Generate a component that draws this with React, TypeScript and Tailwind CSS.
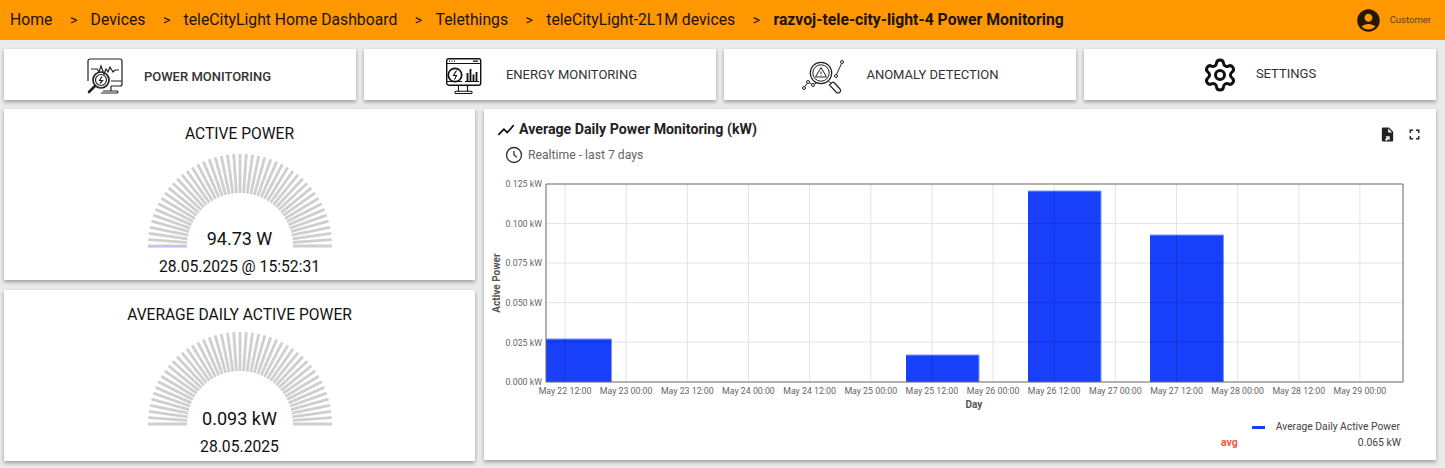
import { Settings } from 'lucide-react'

const crumbs = ['Home', 'Devices', 'teleCityLight Home Dashboard', 'Telethings', 'teleCityLight-2L1M devices']
const xLabels = ['May 22 12:00', 'May 23 00:00', 'May 23 12:00', 'May 24 00:00', 'May 24 12:00', 'May 25 00:00', 'May 25 12:00', 'May 26 00:00', 'May 26 12:00', 'May 27 00:00', 'May 27 12:00', 'May 28 00:00', 'May 28 12:00', 'May 29 00:00']
const yLabels = ['0.125 kW', '0.100 kW', '0.075 kW', '0.050 kW', '0.025 kW', '0.000 kW']
const hLines = [39.6, 79, 118.6, 158]
const bars = [
  { x: 62, y: 155, w: 65.5, h: 43 },
  { x: 422, y: 171, w: 73, h: 27 },
  { x: 544, y: 7, w: 73, h: 191 },
  { x: 666, y: 51, w: 73.5, h: 147 },
]

const gridX = (i: number) => 81 + i * 61.15

function PowerIcon() {
  return (
    <svg width="36" height="36" viewBox="0 0 36 36" fill="none" stroke="#222" strokeWidth="1.2" className="shrink-0 mt-[3px]">
      <path d="M1 17V3a2 2 0 0 1 2-2h30a2 2 0 0 1 2 2v23a2 2 0 0 1-2 2H24" />
      <path d="M1 17v6M24 23h11" />
      <path d="M4 11h6l2 3 2-6 3 8 2-5 2 3 2-5 3 5 2-2h4" />
      <circle cx="14" cy="22" r="8" strokeWidth="1.7" />
      <circle cx="14" cy="22" r="5.500" />
      <path d="M15 18.500l-2.500 4h3L13 25.500" />
      <path d="M8 28l-6 6" strokeWidth="2.600" strokeLinecap="round" />
      <path d="M24 28v5M14 35h16a1 1 0 0 0 0-2H16" />
    </svg>
  )
}

function EnergyIcon() {
  return (
    <svg width="36" height="36" viewBox="0 0 36 36" fill="none" stroke="#111" strokeWidth="1.1" className="shrink-0 mt-[3px]">
      <rect x="0.700" y="0.700" width="34" height="26.500" rx="2" strokeWidth="1.400" />
      <path d="M1 5.500h34" />
      <path d="M3 3.200h1M5.500 3.200h1M8 3.200h1M27 3.200h5" strokeWidth="1.200" />
      <circle cx="9" cy="17" r="6.700" strokeWidth="1.700" />
      <path d="M10.500 12.500l-3 5h3l-2 4" />
      <path d="M21.500 23v-8M24.500 23v-12M27.500 23v-6.500M30.500 23v-9" strokeWidth="1.800" />
      <path d="M19 23.500h14M1 23.500h15" />
      <path d="M12.500 27.500v6M21.500 27.500v6" />
      <path d="M10 35.500a1 1 0 0 1 0-2.200h15a1 1 0 0 1 0 2.200z" />
    </svg>
  )
}

function AnomalyIcon() {
  return (
    <svg width="44" height="34" viewBox="0 0 44 34" fill="none" stroke="#222" strokeWidth="1" className="shrink-0 mt-[5px]">
      <circle cx="20" cy="13" r="10.700" strokeWidth="1.200" />
      <circle cx="20" cy="13" r="8.200" />
      <path d="M20 7.500l5.500 9.500h-11z" />
      <path d="M20 11.500v2.500M20 15v.700" />
      <path d="M27.500 21l2 2" />
      <path d="M28.500 25l2.500-2.500a1.500 1.500 0 0 1 2 0l6 6.500a2.500 2.500 0 0 1-3.500 3.500z" strokeWidth="1.200" />
      <circle cx="41" cy="2" r="1.500" />
      <circle cx="35" cy="16" r="1.500" />
      <path d="M40.500 3.500l-5 11" />
      <circle cx="3" cy="28" r="1.500" />
      <circle cx="7" cy="22" r="1.500" />
      <circle cx="12" cy="25" r="1.500" />
      <path d="M3.800 26.700l2.400-3.400M8.300 22.800l2.400 1.400M13.300 24.300l2.500-1.800" />
    </svg>
  )
}

function Tab({ icon, label, gap, mt, bold }: { icon: React.ReactNode, label: string, gap: string, mt: string, bold?: boolean }) {
  return (
    <div className={`w-[352px] h-[51px] bg-white shadow-[0_2px_4px_rgba(0,0,0,0.35)] flex items-center justify-center ${gap}`}>
      {icon}
      <span className={`text-[13px] leading-none text-[#333] ${mt} ${bold ? 'font-medium text-[#222]' : ''}`}>{label}</span>
    </div>
  )
}

function Gauge({ title, value, stamp, active, gaugeMt, valuePos, stampMt }: { title: string, value: string, stamp: string, active?: boolean, gaugeMt: string, valuePos: string, stampMt: string }) {
  const ticks = Array.from({ length: 47 }, (_, i) => {
    const a = Math.PI - (i / 46) * Math.PI
    return {
      x1: 100 + 53 * Math.cos(a), y1: 96 - 53 * Math.sin(a),
      x2: 100 + 92 * Math.cos(a), y2: 96 - 92 * Math.sin(a),
    }
  })
  return (
    <div className="h-[171px] bg-white shadow-[0_2px_4px_rgba(0,0,0,0.35)] flex flex-col items-center pt-[15px]">
      <div className="text-[15.600px] leading-[20px] text-[#111]">{title}</div>
      <div className={`relative w-[200px] h-[98px] ${gaugeMt}`}>
        <svg width="200" height="98" viewBox="0 0 200 98">
          {ticks.map((t, i) => (
            <line key={i} x1={t.x1} y1={t.y1} x2={t.x2} y2={t.y2} stroke="#d0cece" strokeWidth="2.800" />
          ))}
          {active && <line x1="8" x2="47" y1="96.500" y2="96.500" stroke="#b4c6f5" strokeWidth="1.600" />}
        </svg>
        <div className={`absolute left-0 right-0 text-center text-[18px] leading-[22px] text-[#111] ${valuePos}`}>{value}</div>
      </div>
      <div className={`text-[15.700px] leading-[20px] text-[#111] ${stampMt}`}>{stamp}</div>
    </div>
  )
}

function Chart() {
  return (
    <svg width="950" height="250" viewBox="0 -10 950 250" className="block" style={{ fontFamily: 'Roboto, sans-serif' }}>
      <g stroke="#e3e3e3" strokeWidth="1">
        {hLines.map(y => <line key={y} x1="62" x2="919" y1={y} y2={y} />)}
        {xLabels.map((_, i) => <line key={i} x1={gridX(i)} x2={gridX(i)} y1="0" y2="198" />)}
      </g>
      {bars.map(b => (
        <g key={b.x}>
          <rect x={b.x} y={b.y} width={b.w} height={b.h} fill="#1840fb" />
          <path d={`M${b.x + b.w} ${b.y}V198M${b.x} ${b.y}H${b.x + b.w}`} stroke="#7f97fd" strokeWidth="1" fill="none" />
          {xLabels.map((_, i) => gridX(i) > b.x && gridX(i) < b.x + b.w && (
            <line key={i} x1={gridX(i)} x2={gridX(i)} y1={b.y} y2="198" stroke="#0f2fc4" strokeOpacity="0.6" />
          ))}
          {hLines.map(y => y > b.y && (
            <line key={y} x1={b.x} x2={b.x + b.w} y1={y} y2={y} stroke="#0f2fc4" strokeOpacity="0.6" />
          ))}
        </g>
      ))}
      <path d="M62 0H919V198H62Z" fill="none" stroke="#666" strokeWidth="1" />
      {yLabels.map((l, i) => (
        <text key={l} x="58" y={3.200 + i * 39.6} textAnchor="end" fontSize="8.800" fill="#666">{l}</text>
      ))}
      {xLabels.map((l, i) => (
        <text key={l} x={gridX(i)} y="210" textAnchor="middle" fontSize="8.800" fill="#666">{l}</text>
      ))}
      <text x="490" y="224" textAnchor="middle" fontSize="10" fontWeight="700" fill="#555">Day</text>
      <text transform="translate(16 99) rotate(-90)" textAnchor="middle" fontSize="10" fontWeight="700" fill="#555">Active Power</text>
    </svg>
  )
}

export default function App() {
  return (
    <div className="w-[1445px] h-[468px] overflow-hidden bg-[#ebebeb] font-['Roboto',sans-serif]">
      <header className="h-10 bg-[#ff9800] flex items-center pl-[10px] pr-[14px] text-[15.750px] text-[#1c1300]">
        <div className="flex items-center flex-1">
          {crumbs.map(c => (
            <div key={c} className="flex items-center">
              <span>{c}</span>
              <span className="text-[14px] ml-[17.500px] mr-[13.400px]">&gt;</span>
            </div>
          ))}
          <span className="font-bold">razvoj-tele-city-light-4 Power Monitoring</span>
        </div>
        <svg width="27" height="27" viewBox="0 0 24 24" fill="#241800">
          <path d="M12 2C6.480 2 2 6.480 2 12s4.480 10 10 10 10-4.480 10-10S17.520 2 12 2zm0 4c1.930 0 3.500 1.570 3.500 3.500S13.930 13 12 13s-3.500-1.570-3.500-3.500S10.070 6 12 6zm0 14c-2.030 0-4.430-.820-6.140-2.880C7.550 15.800 9.680 15 12 15s4.450.800 6.140 2.120C16.430 19.180 14.030 20 12 20z" />
        </svg>
        <span className="ml-[8px] text-[9.500px] text-[#5c4210]">Customer</span>
      </header>

      <div className="pl-1 pr-[9px]">
        <div className="flex gap-2 mt-[9px]">
          <Tab icon={<PowerIcon />} label="POWER MONITORING" gap="gap-[21px] pr-[2px]" mt="mt-[3px]" bold />
          <Tab icon={<EnergyIcon />} label="ENERGY MONITORING" gap="gap-[24px] pl-[3px]" mt="" />
          <Tab icon={<AnomalyIcon />} label="ANOMALY DETECTION" gap="gap-[21px]" mt="" />
          <Tab icon={<Settings size={36} strokeWidth={2} color="#111" />} label="SETTINGS" gap="gap-[18px] pr-[2px]" mt="-mt-[3px]" />
        </div>

        <div className="flex gap-[9px] mt-[9px]">
          <div className="w-[471px] flex flex-col gap-[10px]">
            <Gauge title="ACTIVE POWER" value="94.73 W" stamp="28.05.2025 @ 15:52:31" gaugeMt="mt-[6px]" valuePos="-bottom-[2px]" stampMt="mt-[9px]" active />
            <Gauge title="AVERAGE DAILY ACTIVE POWER" value="0.093 kW" stamp="28.05.2025" gaugeMt="mt-[3px]" valuePos="-bottom-[4px]" stampMt="mt-[11px]" />
          </div>

          <div className="flex-1 h-[351px] bg-white shadow-[0_2px_4px_rgba(0,0,0,0.35)] pt-[11px] relative">
            <div className="flex items-center pl-[12px] h-5 gap-[3px]">
              <svg width="20" height="20" viewBox="0 0 24 24" fill="#111">
                <path d="M3.500 18.490l6-6.010 4 4L22 6.920l-1.410-1.410-7.090 7.970-4-4L2 16.990z" />
              </svg>
              <span className="text-[14.200px] font-bold text-[#222]">Average Daily Power Monitoring (kW)</span>
            </div>
            <div className="absolute right-[13px] top-[17px] flex items-center gap-[10px]">
              <svg width="17" height="17" viewBox="0 0 24 24" fill="#222">
                <path d="M14 2H6c-1.100 0-2 .900-2 2v16c0 1.100.900 2 2 2h12c1.100 0 2-.900 2-2V8l-6-6zm-1 7V3.500L18.500 9H13zm-4.500 10l2.500-2.500L9 14.500h6v6l-2-2-2.500 2.500-2-1.500z" />
              </svg>
              <svg width="17" height="17" viewBox="0 0 24 24" fill="#222">
                <path d="M7 14H5v5h5v-2H7v-3zm-2-4h2V7h3V5H5v5zm12 7h-3v2h5v-5h-2v3zM14 5v2h3v3h2V5h-5z" />
              </svg>
            </div>
            <div className="flex items-center pl-[21px] mt-[6px] h-[18px] gap-[5px] text-[12.200px] text-[#666]">
              <svg width="18" height="18" viewBox="0 0 24 24" fill="none" stroke="#333" strokeWidth="1.800">
                <circle cx="12" cy="12" r="10" />
                <path d="M12 6.500V12l4 3" />
              </svg>
              Realtime - last 7 days
            </div>
            <div className="mt-[10px]">
              <Chart />
            </div>
            <div className="flex justify-end items-center gap-[11px] pr-[36px] mt-[-5px] h-4 text-[10.300px] text-[#444]">
              <span className="w-[13px] h-[3px] bg-[#1840fb]" />
              Average Daily Active Power
            </div>
            <div className="flex items-center h-4 pl-[737px] pr-[35px] text-[10.400px] text-[#444]">
              <span className="font-bold text-[#f4553f] flex-1">avg</span>
              0.065 kW
            </div>
          </div>
        </div>
      </div>
    </div>
  )
}
